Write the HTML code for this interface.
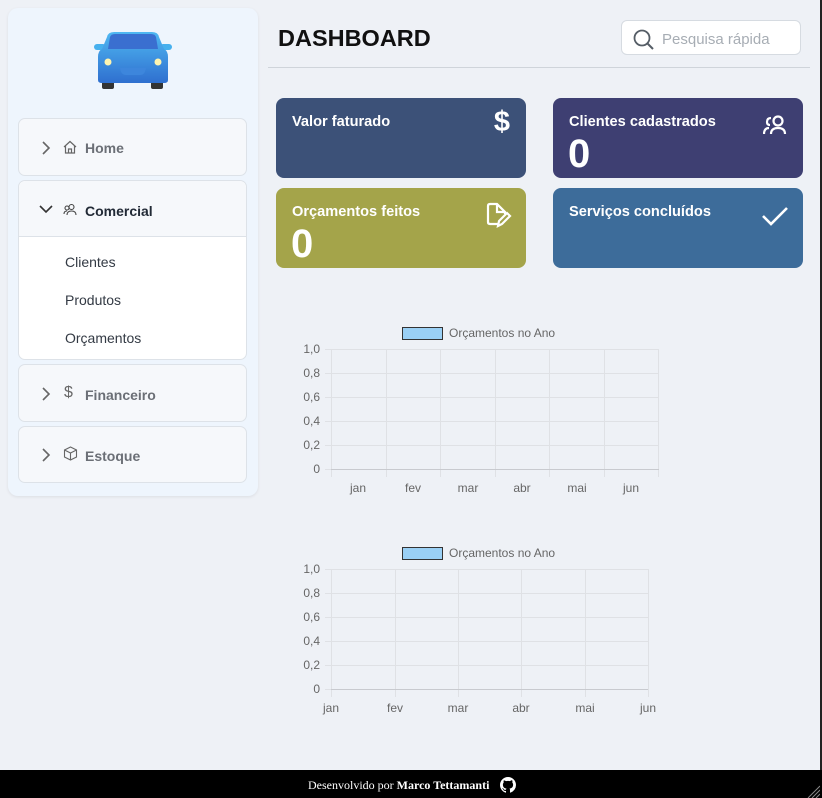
<!DOCTYPE html>
<html><head><meta charset="utf-8"><style>
*{box-sizing:border-box;margin:0;padding:0}
body{width:822px;height:798px;background:#eef1f6;font-family:"Liberation Sans",sans-serif;position:relative;overflow:hidden}
.abs{position:absolute}
.side{left:8px;top:8px;width:250px;height:488px;background:#eef5fd;border-radius:10px;box-shadow:0 1px 3px rgba(0,0,0,.08)}
.item{position:absolute;left:18px;width:229px;background:#f6f8fb;border:1px solid #dde2e8;border-radius:7px}
.item .lbl{position:absolute;left:66px;font-weight:bold;font-size:14px;color:#6b6f76}
.chev{position:absolute;left:22px}
.ic{position:absolute;left:44px}
.sub{position:absolute;left:46px;font-size:14px;color:#333a44}
.card{position:absolute;width:250px;height:80px;border-radius:8px;color:#fff}
.card .t{position:absolute;left:16px;top:16px;font-weight:bold;font-size:14.6px}
.card .n{position:absolute;left:15px;top:34px;font-weight:bold;font-size:40px}
</style></head><body>
<div class="abs side"></div>
<svg class="abs" style="left:94px;top:31px" width="78" height="58" viewBox="0 0 78 58">
<defs><linearGradient id="g" x1="0" y1="0" x2="0" y2="1"><stop offset="0" stop-color="#4fb8f2"/><stop offset="1" stop-color="#2f6fcf"/></linearGradient></defs>
<rect x="8" y="50" width="12" height="8" rx="2" fill="#333"/><rect x="57" y="50" width="12" height="8" rx="2" fill="#333"/>
<rect x="0" y="13" width="12" height="6" rx="3" fill="#46b0ee"/><rect x="66" y="13" width="12" height="6" rx="3" fill="#46b0ee"/>
<path d="M13 6 Q14 1 20 1 H58 Q64 1 65 6 L70 18 Q74 20 74 26 V49 Q74 52 70 52 H8 Q4 52 4 49 V26 Q4 20 8 18 Z" fill="url(#g)"/>
<path d="M16 6 Q17 3 21 3 H57 Q61 3 62 6 L64 18 H14 Z" fill="#3a6fd0"/>
<circle cx="14" cy="31" r="3.5" fill="#fff5b0"/><circle cx="64" cy="31" r="3.5" fill="#fff5b0"/>
<path d="M26 37 H52 Q51 44 46 44 H32 Q27 44 26 37Z" fill="#3d86dc"/>
</svg>
<div class="item" style="top:118px;height:58px">
<svg class="chev" style="top:22px" width="10" height="14" viewBox="0 0 10 14"><path d="M2 1 L8 7 L2 13" fill="none" stroke="#666" stroke-width="1.6"/></svg>
<svg class="ic" style="top:21px" width="14" height="14" viewBox="0 0 14 14"><path d="M1 7 L7 1.5 L13 7 M2.5 6 V13 H11.5 V6 M5.5 13 V9 H8.5 V13" fill="none" stroke="#666" stroke-width="1.2"/></svg>
<div class="lbl" style="top:21px">Home</div></div>
<div class="item" style="top:180px;height:180px;background:#fff">
<div style="position:absolute;left:0;top:0;right:0;height:56px;background:#f6f8fb;border-bottom:1px solid #dde2e8;border-radius:7px 7px 0 0"></div>
<svg class="chev" style="left:20px;top:23px" width="14" height="10" viewBox="0 0 14 10"><path d="M1 2 L7 8 L13 2" fill="none" stroke="#333" stroke-width="1.6"/></svg>
<svg class="ic" style="top:22px" width="14" height="13" viewBox="0 0 14 13"><circle cx="8.5" cy="4" r="2.5" fill="none" stroke="#444" stroke-width="1.1"/><circle cx="4" cy="5" r="2" fill="none" stroke="#444" stroke-width="1.1"/><path d="M4 12 Q4 8 8.5 8 Q13 8 13 12 M1 11 Q1 8 4 8" fill="none" stroke="#444" stroke-width="1.1"/></svg>
<div class="lbl" style="top:22px;color:#222a36">Comercial</div>
<div class="sub" style="top:73px">Clientes</div>
<div class="sub" style="top:111px">Produtos</div>
<div class="sub" style="top:149px">Orçamentos</div></div>
<div class="item" style="top:364px;height:58px">
<svg class="chev" style="top:22px" width="10" height="14" viewBox="0 0 10 14"><path d="M2 1 L8 7 L2 13" fill="none" stroke="#666" stroke-width="1.6"/></svg>
<div style="position:absolute;left:45px;top:19px;font-size:16px;color:#666">$</div>
<div class="lbl" style="top:22px">Financeiro</div></div>
<div class="item" style="top:426px;height:57px">
<svg class="chev" style="top:21px" width="10" height="14" viewBox="0 0 10 14"><path d="M2 1 L8 7 L2 13" fill="none" stroke="#666" stroke-width="1.6"/></svg>
<svg class="ic" style="top:19px" width="15" height="15" viewBox="0 0 15 15"><path d="M7.5 1 L13.5 4 V11 L7.5 14 L1.5 11 V4 Z M1.5 4 L7.5 7 L13.5 4 M7.5 7 V14" fill="none" stroke="#666" stroke-width="1.1"/></svg>
<div class="lbl" style="top:21px">Estoque</div></div>

<div class="abs" style="left:278px;top:25px;font-weight:bold;font-size:23.5px;color:#111">DASHBOARD</div>
<div class="abs" style="left:268px;top:67px;width:542px;height:1px;background:#cfd4da"></div>
<div class="abs" style="left:621px;top:20px;width:180px;height:35px;background:#fff;border:1px solid #d6dbe1;border-radius:6px">
<svg style="position:absolute;left:11px;top:8px" width="22" height="22" viewBox="0 0 22 22"><circle cx="9" cy="9" r="7.5" fill="none" stroke="#555d66" stroke-width="1.8"/><path d="M14.5 14.5 L20 20" stroke="#555d66" stroke-width="2"/></svg>
<div style="position:absolute;left:40px;top:10px;font-size:15px;color:#a7adb4">Pesquisa rápida</div></div>

<div class="card" style="left:276px;top:98px;background:#3c5178"><div class="t">Valor faturado</div>
<div style="position:absolute;right:16px;top:8px;font-size:29px;font-weight:bold">$</div></div>
<div class="card" style="left:553px;top:98px;background:#3e3f72"><div class="t">Clientes cadastrados</div><div class="n">0</div>
<svg style="position:absolute;right:14px;top:16px" width="26" height="22" viewBox="0 0 26 22"><circle cx="15" cy="7" r="4.5" fill="none" stroke="#fff" stroke-width="2.2"/><path d="M8 4 Q4 4 4 8 Q4 11 7 11 M1 20 Q1 14 6 14 M8 20 Q8 14 15 14 Q22 14 22 20" fill="none" stroke="#fff" stroke-width="2.2"/></svg></div>
<div class="card" style="left:276px;top:188px;background:#a4a44a"><div class="t">Orçamentos feitos</div><div class="n">0</div>
<svg style="position:absolute;right:14px;top:14px" width="26" height="26" viewBox="0 0 26 26"><path d="M12 22 H4 Q2 22 2 20 V4 Q2 2 4 2 H11 L19 10 V12 M11 2 V10 H19" fill="none" stroke="#fff" stroke-width="2.2"/><path d="M12 24 L13 19 L21 11 L24 14 L16 22 Z" fill="none" stroke="#fff" stroke-width="2.2"/></svg></div>
<div class="card" style="left:553px;top:188px;background:#3d6c9a"><div class="t">Serviços concluídos</div>
<svg style="position:absolute;right:14px;top:18px" width="28" height="20" viewBox="0 0 28 20"><path d="M2 10 L10 18 L26 2" fill="none" stroke="#fff" stroke-width="2.6"/></svg></div>

<svg class="abs" style="left:0;top:0" width="822" height="798">
<g font-family="Liberation Sans,sans-serif" font-size="12" fill="#666">
<rect x="402.5" y="327.5" width="40" height="12" fill="#9ad0f5" stroke="#333"/>
<text x="449" y="337">Orçamentos no Ano</text>
<g stroke="#dfe1e5">
<path d="M331 349.5H659M331 373.5H659M331 397.5H659M331 421.5H659M331 445.5H659"/>
<path d="M331.5 349V477M386.5 349V477M440.5 349V477M495.5 349V477M549.5 349V477M604.5 349V477M658.5 349V477"/>
<path d="M325 349.5H331M325 373.5H331M325 397.5H331M325 421.5H331M325 445.5H331M325 469.5H331"/>
</g><path d="M331 469.5H659" stroke="#c8cacf"/>
<g text-anchor="end"><text x="320" y="353">1,0</text><text x="320" y="377">0,8</text><text x="320" y="401">0,6</text><text x="320" y="425">0,4</text><text x="320" y="449">0,2</text><text x="320" y="473">0</text></g>
<g text-anchor="middle"><text x="358" y="492">jan</text><text x="413" y="492">fev</text><text x="468" y="492">mar</text><text x="522" y="492">abr</text><text x="577" y="492">mai</text><text x="631" y="492">jun</text></g>

<rect x="402.5" y="547.5" width="40" height="12" fill="#9ad0f5" stroke="#333"/>
<text x="449" y="557">Orçamentos no Ano</text>
<g stroke="#dfe1e5">
<path d="M331 569.5H648M331 593.5H648M331 617.5H648M331 641.5H648M331 665.5H648"/>
<path d="M331.5 569V697M395.5 569V697M458.5 569V697M521.5 569V697M585.5 569V697M648.5 569V697"/>
<path d="M325 569.5H331M325 593.5H331M325 617.5H331M325 641.5H331M325 665.5H331M325 689.5H331"/>
</g><path d="M331 689.5H648" stroke="#c8cacf"/>
<g text-anchor="end"><text x="320" y="573">1,0</text><text x="320" y="597">0,8</text><text x="320" y="621">0,6</text><text x="320" y="645">0,4</text><text x="320" y="669">0,2</text><text x="320" y="693">0</text></g>
<g text-anchor="middle"><text x="331" y="712">jan</text><text x="395" y="712">fev</text><text x="458" y="712">mar</text><text x="521" y="712">abr</text><text x="585" y="712">mai</text><text x="648" y="712">jun</text></g>
</g></svg>

<div class="abs" style="left:820px;top:0;width:2px;height:798px;background:#222"></div>
<div class="abs" style="left:0;top:770px;width:822px;height:28px;background:#000;color:#fff;font-family:'Liberation Serif',serif;font-size:12px">
<div style="position:absolute;left:308px;top:8px">Desenvolvido por <b>Marco Tettamanti</b></div>
<svg style="position:absolute;left:500px;top:7px" width="16" height="16" viewBox="0 0 16 16"><path fill="#fff" d="M8 0C3.580 0 0 3.58 0 8c0 3.54 2.29 6.53 5.47 7.59.4.07.55-.17.55-.38v-1.330c-2.23.48-2.7-1.07-2.7-1.07-.36-.92-.89-1.170-.89-1.170-.73-.5.05-.49.05-.49.8.06 1.23.83 1.23.83.71 1.22 1.87.87 2.33.66.07-.52.28-.87.5-1.070-1.78-.2-3.64-.89-3.64-3.950 0-.87.31-1.59.82-2.150-.08-.2-.36-1.020.08-2.120 0 0 .67-.21 2.2.82A7.700 7.700 0 0 1 8 3.870c.68 0 1.360.09 2 .27 1.530-1.040 2.200-.82 2.200-.82.44 1.100.16 1.920.08 2.120.51.56.82 1.270.82 2.150 0 3.070-1.870 3.750-3.650 3.950.29.25.54.73.54 1.480v2.200c0 .21.15.46.55.38A8 8 0 0 0 16 8c0-4.420-3.580-8-8-8z"/></svg>
<svg style="position:absolute;left:806px;top:14px" width="14" height="14" viewBox="0 0 14 14"><path d="M2 14L14 2M6 14L14 6M10 14L14 10" stroke="#888" stroke-width="1"/></svg>
</div>
</body></html>
